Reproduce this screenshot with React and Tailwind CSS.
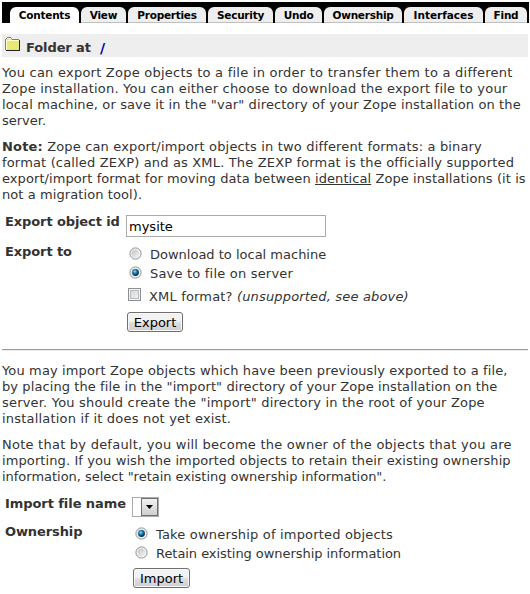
const tabs = [
  ["Contents", "w-[69px]"],
  ["View", "w-[45px]"],
  ["Properties", "w-[78px]"],
  ["Security", "w-[65px]"],
  ["Undo", "w-[47px]"],
  ["Ownership", "w-[78px]"],
  ["Interfaces", "w-[79px] tracking-[0]"],
  ["Find", "w-[42px]"],
];

function Tabs() {
  return (
    <nav className="ml-[2px] mt-[2px] flex h-[21px] w-[527px] gap-[2px] bg-black pl-[8px] pt-[5px] text-[10.5px] font-bold leading-[17px] tracking-[-0.25px] text-black">
      {tabs.map(([name, width], i) => (
        <a
          key={name}
          className={`${width} h-[16px] whitespace-nowrap rounded-t-[6px] text-center ${
            i === 0 ? "bg-white" : "border-b border-[#c0c0c0] bg-[#eeeeee]"
          }`}
        >
          {name}
        </a>
      ))}
    </nav>
  );
}

function FolderIcon() {
  return (
    <svg width="16" height="16" viewBox="0 0 16 16" shapeRendering="crispEdges">
      <defs>
        <pattern id="dither" width="2" height="2" patternUnits="userSpaceOnUse">
          <rect width="2" height="2" fill="#ffff00" />
          <rect width="1" height="1" fill="#e2e270" />
          <rect x="1" y="1" width="1" height="1" fill="#e2e270" />
        </pattern>
      </defs>
      <path d="M2 1h4v1h1v1h7v11H1V2h1z" fill="url(#dither)" />
      <path d="M2 0h4v1H2zM1 1h1v1H1zM6 1h1v1H6zM7 2h7v1H7zM0 2h1v11H0z" fill="#808060" />
      <path d="M2 1h4v1H2zM1 3h13v1H1zM1 3h1v10H1z" fill="#ffffd0" />
      <path d="M14 3h1v11h-1zM1 13h14v1H1z" fill="#222" />
    </svg>
  );
}

function Lines({ items }) {
  return items.map(([text, spacing], i) => (
    <span key={i} className={`block h-[16px] whitespace-nowrap ${spacing}`}>
      {text}
    </span>
  ));
}

function Radio({ checked }) {
  return (
    <svg width="13" height="13" viewBox="0 0 13 13" className="shrink-0">
      <defs>
        <linearGradient id="well" x1="0" y1="0" x2="1" y2="1">
          <stop offset="0" stopColor="#bfc3c8" />
          <stop offset="1" stopColor="#f4f4f4" />
        </linearGradient>
        <radialGradient id="dot" cx=".4" cy=".35" r=".6">
          <stop offset="0" stopColor="#a5e4fa" />
          <stop offset=".4" stopColor="#2389c0" />
          <stop offset="1" stopColor="#0b2f4f" />
        </radialGradient>
      </defs>
      <circle cx="6.5" cy="6.5" r="5.6" fill="#f6f6f6" stroke="#8e8f8f" />
      <circle cx="6.5" cy="6.5" r="4" fill="url(#well)" />
      {checked && <circle cx="6.5" cy="6.5" r="3.4" fill="url(#dot)" />}
    </svg>
  );
}

function Option({ label, checked, spacing }) {
  return (
    <label className="flex h-[19px] items-start gap-[8px]">
      <Radio checked={checked} />
      <span className={`whitespace-nowrap ${spacing}`}>{label}</span>
    </label>
  );
}

function Button({ children, width }) {
  return (
    <button
      className={`${width} block h-[20px] rounded-[3px] border border-[#707070] bg-linear-to-b from-[#f2f2f2] from-45% via-[#dddddd] via-55% to-[#cfcfcf] text-center leading-[19px] text-black shadow-[inset_0_0_0_1px_#f8f8f8]`}
    >
      {children}
    </button>
  );
}

const exportText = [
  ["You can export Zope objects to a file in order to transfer them to a different", "tracking-[0.24px]"],
  ["Zope installation. You can either choose to download the export file to your", "tracking-[0.2px]"],
  ['local machine, or save it in the "var" directory of your Zope installation on the', "tracking-[0.12px]"],
  ["server.", ""],
];

const noteText = [
  [<><b>Note:</b> Zope can export/import objects in two different formats: a binary</>, "tracking-[0.16px]"],
  ["format (called ZEXP) and as XML. The ZEXP format is the officially supported", "tracking-[0.16px]"],
  [<>export/import format for moving data between <u className="underline-offset-1">identical</u> Zope installations (it is</>, "tracking-[0.08px]"],
  ["not a migration tool).", "tracking-[0.09px]"],
];

const importText = [
  ["You may import Zope objects which have been previously exported to a file,", "tracking-[0.135px]"],
  ['by placing the file in the "import" directory of your Zope installation on the', "tracking-[0.09px]"],
  ['server. You should create the "import" directory in the root of your Zope', "tracking-[0.19px]"],
  ["installation if it does not yet exist.", "tracking-[0.2px]"],
];

const ownerText = [
  ["Note that by default, you will become the owner of the objects that you are", "tracking-[0.24px]"],
  ["importing. If you wish the imported objects to retain their existing ownership", "tracking-[0.1px]"],
  ['information, select "retain existing ownership information".', "tracking-[-0.02px]"],
];

export default function App() {
  return (
    <main className="flex h-[594px] w-[530px] flex-col overflow-hidden bg-white font-['Verdana','DejaVu_Sans',sans-serif] text-[13px] leading-[16px] text-[#333333]">
      <Tabs />
      <header className="ml-[2px] mt-[11px] flex h-[23px] w-[526px] items-start bg-[#eeeeee] pl-[3px] pt-[3px] font-bold">
        <FolderIcon />
        <h1 className="ml-[5px] mt-[3px] whitespace-nowrap tracking-[-0.1px]">Folder at</h1>
        <span className="ml-[9px] mt-[3px] text-[14px] text-[#000099]">/</span>
      </header>

      <p className="ml-[2px] mt-[8px]"><Lines items={exportText} /></p>
      <p className="ml-[2px] mt-[10px]"><Lines items={noteText} /></p>

      <form className="mt-[12px] flex h-[134px] pl-[5px]">
        <div className="w-[121px] font-bold">
          <div className="mt-[-1px] h-[30px] whitespace-nowrap tracking-[-0.1px]">Export object id</div>
          <div className="tracking-[-0.1px]">Export to</div>
        </div>
        <div>
          <input readOnly value="mysite" className="block h-[22px] w-[200px] border border-[#ababab] px-[2px] pt-[1px] text-black outline-none" />
          <div className="ml-[3px] mt-[10px]">
            <Option label="Download to local machine" spacing="" />
            <Option label="Save to file on server" checked spacing="tracking-[0.2px]" />
          </div>
          <label className="ml-[2px] mt-[3px] flex h-[24px] items-start gap-[8px]">
            <span className="h-[13px] w-[13px] border border-[#8e8f8f] bg-linear-to-br from-[#cfd2d6] to-[#f6f6f6] shadow-[inset_0_0_0_1px_#f4f4f4,inset_0_0_0_2px_#b8bcc2]" />
            <span className="mt-[1px] whitespace-nowrap tracking-[0.17px]">XML format? <i>(unsupported, see above)</i></span>
          </label>
          <div className="ml-[1px]"><Button width="w-[56px]">Export</Button></div>
        </div>
      </form>

      <hr className="ml-[2px] h-[2px] w-[526px] border-b border-t border-b-[#eeeeee] border-t-[#9a9a9a]" />

      <p className="ml-[2px] mt-[12px]"><Lines items={importText} /></p>
      <p className="ml-[2px] mt-[10px]"><Lines items={ownerText} /></p>

      <form className="mt-[11px] flex pl-[5px]">
        <div className="w-[127px] font-bold">
          <div className="h-[28px] whitespace-nowrap tracking-[-0.07px]">Import file name</div>
          <div className="tracking-[-0.1px]">Ownership</div>
        </div>
        <div>
          <div className="mt-[1px] flex h-[20px] w-[27px] justify-end border border-[#ababab]">
            <span className="flex h-[18px] w-[17px] items-center justify-center border border-[#707070] bg-linear-to-b from-[#f2f2f2] to-[#cfcfcf]">
              <svg width="7" height="4" viewBox="0 0 7 4"><path d="M0 0h7L3.5 4z" fill="#000" /></svg>
            </span>
          </div>
          <div className="ml-[3px] mt-[10px]">
            <Option label="Take ownership of imported objects" checked spacing="tracking-[0.18px]" />
            <Option label="Retain existing ownership information" spacing="tracking-[-0.05px]" />
          </div>
          <div className="ml-[1px] mt-[3px]"><Button width="w-[57px]">Import</Button></div>
        </div>
      </form>
    </main>
  );
}
